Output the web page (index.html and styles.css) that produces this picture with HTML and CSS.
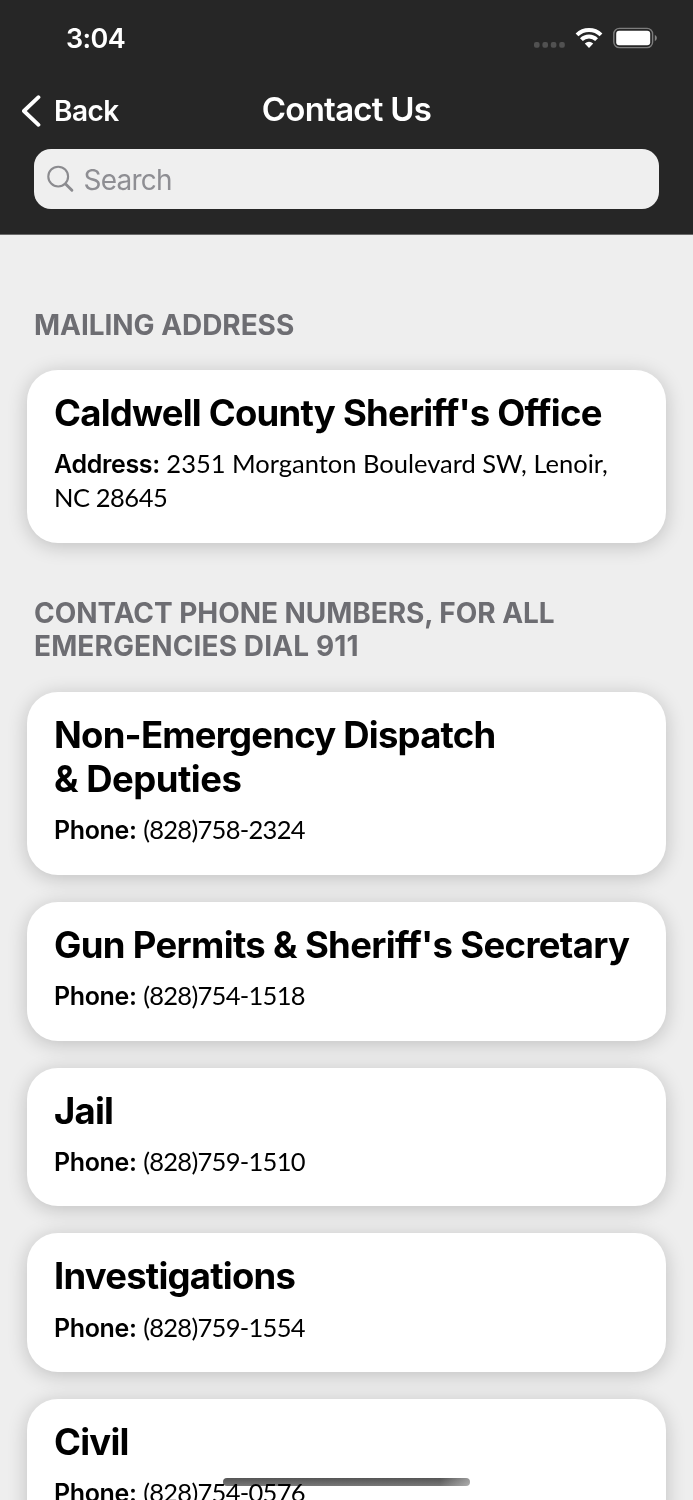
FILE: index.html
```html
<!DOCTYPE html>
<html lang="en">
<head>
<meta charset="utf-8">
<title>Contact Us</title>
<link rel="stylesheet" href="styles.css">
</head>
<body>
<div class="screen">
  <header class="header">
    <div class="status">
      <span class="time">3:04</span>
      <div class="indicators">
        <svg class="dots" width="32" height="22" viewBox="0 0 32 22" fill="#515151"><rect x="0" y="15" width="5.6" height="5.8" rx="2"/><rect x="8.4" y="15" width="5.6" height="5.8" rx="2"/><rect x="16.8" y="15" width="5.6" height="5.8" rx="2"/><rect x="25.2" y="15" width="5.6" height="5.8" rx="2"/></svg>
        <svg class="wifi" width="28" height="22" viewBox="0 0 28 22"><g fill="none" stroke="#fff" stroke-width="4"><path d="M2 7.9A17.3 17.3 0 0 1 26 7.9"/><path d="M6.4 12.7A10.8 10.8 0 0 1 21.6 12.7"/></g><path fill="#fff" d="M14 21 9.8 16.6Q14 13 18.2 16.6Z"/></svg>
        <svg class="battery" width="45" height="22" viewBox="0 0 45 22"><rect x=".8" y="1.4" width="38.8" height="19.2" rx="5.6" fill="none" stroke="#7d7d7d" stroke-width="1.4"/><rect x="3.2" y="3.8" width="34" height="14.4" rx="3" fill="#fff"/><path d="M41.8 7.7Q43.9 8.9 43.9 11T41.8 14.3Z" fill="#858585"/></svg>
      </div>
    </div>
    <nav class="nav">
      <a class="back"><svg width="20" height="32" viewBox="0 0 20 32" fill="none" stroke="#fff" stroke-width="3.8" stroke-linecap="round" stroke-linejoin="round"><path d="M16.5 2.2 1.9 16l14.6 13.8"/></svg><span>Back</span></a>
      <h1 class="heading">Contact Us</h1>
    </nav>
    <div class="search">
      <svg width="28" height="28" viewBox="0 0 28 28" fill="none" stroke="#8b8b8f" stroke-linecap="round"><circle cx="11.2" cy="11.6" r="9.9" stroke-width="2.1"/><path d="m18.6 19 6.3 6.3" stroke-width="2.9"/></svg>
      <span>Search</span>
    </div>
  </header>
  <main class="content">
    <h2 class="section first">MAILING ADDRESS</h2>
    <article class="card">
      <h3>Caldwell County Sheriff's Office</h3>
      <p><b>Address:</b> <span class="street">2351 Morganton Boulevard SW, Lenoir,</span><br><span class="zip">NC 28645</span></p>
    </article>
    <h2 class="section second">CONTACT PHONE NUMBERS, FOR ALL<br><span class="dial">EMERGENCIES DIAL 911</span></h2>
    <div class="list">
      <article class="card"><h3>Non-Emergency Dispatch<br><span class="deputies">&amp; Deputies</span></h3><p><b>Phone:</b> <span class="number">(828)758-2324</span></p></article>
      <article class="card"><h3 class="permits">Gun Permits &amp; Sheriff's Secretary</h3><p><b>Phone:</b> <span class="number">(828)754-1518</span></p></article>
      <article class="card"><h3>Jail</h3><p><b>Phone:</b> <span class="number">(828)759-1510</span></p></article>
      <article class="card"><h3>Investigations</h3><p><b>Phone:</b> <span class="number">(828)759-1554</span></p></article>
      <article class="card"><h3>Civil</h3><p><b>Phone:</b> <span class="number">(828)754-0576</span></p></article>
    </div>
  </main>
  <div class="home-bar"></div>
</div>
</body>
</html>
```
FILE: styles.css
```css
* { box-sizing: border-box; margin: 0; padding: 0; }
body { background: #eee; font-family: Inter, "Liberation Sans", sans-serif; }
.screen { position: relative; width: 693px; height: 1500px; overflow: hidden; background: #eee; }
.header { height: 235px; background: #262626; border-bottom: 1px solid #6a6a6a; color: #fff; }
.status { height: 76px; padding: 0 35px 0 66px; display: flex; justify-content: space-between; align-items: center; }
.time { font-size: 27px; font-weight: 600; letter-spacing: -0.6px; }
.indicators { display: flex; align-items: center; }
.wifi { margin-left: 9px; }
.battery { margin-left: 10px; }
.nav { height: 73px; display: grid; grid-template-columns: 1fr auto 1fr; align-items: center; padding: 0 22px; }
.back { display: flex; align-items: center; gap: 12px; font-size: 28px; font-weight: 600; letter-spacing: -0.5px; padding-bottom: 4px; }
.heading { font-size: 33px; font-weight: 600; letter-spacing: -0.75px; line-height: 40px; padding-bottom: 8px; }
.search { height: 60px; margin: 0 34px 0 33.5px; padding-left: 13px; border-radius: 17px; background: #efefef; color: #8e8e93; display: flex; align-items: center; gap: 9px; font-size: 28px; letter-spacing: -0.75px; }
.search span { padding-top: 2px; }
.content { padding: 0 27px; }
.section { padding: 0 7px; color: #6d6d72; font-size: 28px; font-weight: 650; line-height: 33.5px; letter-spacing: -0.05px; white-space: nowrap; }
.dial { letter-spacing: 0.12px; }
.first { padding-top: 74px; padding-bottom: 27.7px; }
.second { padding-top: 54.3px; padding-bottom: 28.6px; }
.card { background: #fff; border-radius: 31px; padding: 22px 27px 27.7px; box-shadow: 0 3px 20px rgba(0, 0, 0, .2); color: #000; }
.card h3 { font-size: 36.5px; font-weight: 700; line-height: 43.7px; letter-spacing: -0.78px; white-space: nowrap; }
.card .permits { letter-spacing: -0.67px; }
.card .deputies { letter-spacing: -0.5px; }
.card p { margin-top: 11.6px; font-family: Lato, "Liberation Sans", sans-serif; font-size: 25.5px; line-height: 33.7px; white-space: nowrap; }
.card b { font-family: Inter, "Liberation Sans", sans-serif; font-size: 25px; font-weight: 600; line-height: 1; letter-spacing: -0.35px; }
.number { letter-spacing: -0.72px; }
.zip { letter-spacing: -0.45px; }
.list { display: flex; flex-direction: column; gap: 27px; }
.home-bar { position: absolute; left: 223px; top: 1478px; width: 247px; height: 8px; border-radius: 4px; background: linear-gradient(90deg, transparent 88%, rgba(255, 255, 255, .4)), linear-gradient(#555, #777); mix-blend-mode: multiply; }
```
